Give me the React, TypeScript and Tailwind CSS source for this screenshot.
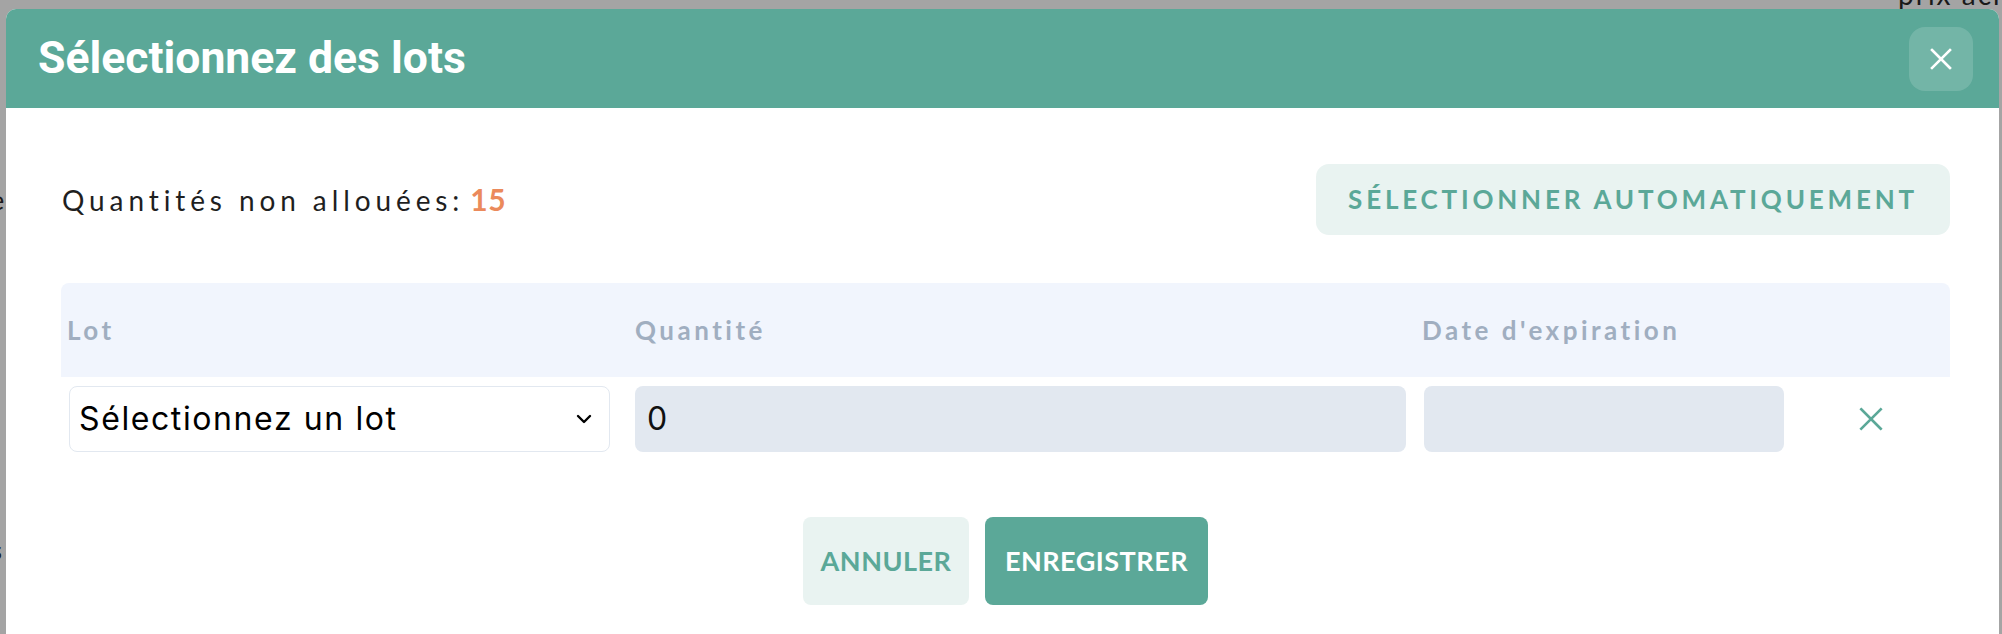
import React from "react";

const body = { fontFamily: "Lato, 'Noto Sans', sans-serif" };
const sys = { fontFamily: "Inter, 'Noto Sans', sans-serif" };
const title = { fontFamily: "Roboto, 'Noto Sans', sans-serif" };

function XIcon({ size, stroke, color }: { size: number; stroke: number; color: string }) {
  return (
    <svg width={size} height={size} viewBox="0 0 24 24" fill="none" stroke={color} strokeWidth={stroke} strokeLinecap="square">
      <path d="M3 3 L21 21 M21 3 L3 21" />
    </svg>
  );
}

export default function App() {
  return (
    <div className="relative h-[634px] w-[2002px] overflow-hidden bg-[#a4a4a4] pl-[6px] pt-[9px]">
      {/* page content behind the overlay */}
      <span className="absolute left-[1898px] top-[-20px] whitespace-nowrap text-[28px] leading-none tracking-[2px] text-[#1a1a1a]" style={body}>
        prix achat
      </span>
      <span className="absolute left-[-10px] top-[186px] whitespace-nowrap text-[27px] leading-none text-[#1a1a1a]" style={body}>
        e
      </span>
      <span className="absolute left-[-10px] top-[536px] whitespace-nowrap text-[27px] font-bold leading-none text-[#1a1a1a]" style={body}>
        s
      </span>

      <div className="relative w-[1993px] overflow-hidden rounded-t-[10px] bg-white">
        {/* header */}
        <div className="flex h-[99px] items-center justify-between bg-[#5ba898] pl-[32px] pr-[26px]">
          <h2 className="text-[44.5px] font-bold leading-none text-white" style={title}>
            Sélectionnez des lots
          </h2>
          <button className="flex h-[64px] w-[64px] items-center justify-center rounded-[16px] bg-white/15">
            <XIcon size={24} stroke={2.6} color="#ffffff" />
          </button>
        </div>

        {/* body */}
        <div className="h-[540px] pl-[55px] pr-[49px] pt-[56px]">
          <div className="flex items-center justify-between">
            <p className="pl-[1px] text-[28px] tracking-[4.9px] text-[#1f1f1f]" style={body}>
              Quantités non allouées:
              <span className="ml-[6px] text-[30px] font-bold tracking-[0.5px] text-[#eb8a5b]">15</span>
            </p>
            <button
              className="h-[71px] w-[634px] rounded-[13px] bg-[#e9f3f1] text-[26px] font-bold uppercase tracking-[3.8px] text-[#5ba898]"
              style={body}
            >
              Sélectionner automatiquement
            </button>
          </div>

          {/* table */}
          <div className="mt-[48px]">
            <div
              className="grid h-[94px] grid-cols-[568px_787px_376px_1fr] items-center rounded-t-[8px] bg-[#f1f5fd] text-[26px] font-bold tracking-[3.5px] text-[#a0aec0]"
              style={body}
            >
              <div className="pl-[6px]">Lot</div>
              <div className="pl-[6px]">Quantité</div>
              <div className="pl-[6px]">Date d'expiration</div>
              <div />
            </div>
            <div className="mt-[9px] grid grid-cols-[568px_787px_376px_1fr] items-center">
              <div className="pl-[8px]">
                <div
                  className="flex h-[66px] w-[541px] items-center justify-between rounded-[8px] border-[1.5px] border-[#e2e8f0] bg-white pl-[9px] pr-[17px] text-[32px] tracking-[1.6px] text-black"
                  style={sys}
                >
                  <span>Sélectionnez un lot</span>
                  <svg width="16" height="10" viewBox="0 0 16 10" fill="none" stroke="#000" strokeWidth="2.4" strokeLinecap="round" strokeLinejoin="round">
                    <path d="M2 2 L8 8 L14 2" />
                  </svg>
                </div>
              </div>
              <div className="pl-[6px]">
                <div className="flex h-[66px] w-[771px] items-center rounded-[8px] bg-[#e2e8f0] pl-[12px] text-[32px] text-[#111]" style={sys}>
                  0
                </div>
              </div>
              <div className="pl-[8px]">
                <div className="h-[66px] w-[360px] rounded-[8px] bg-[#e2e8f0]" />
              </div>
              <div className="flex items-center justify-center">
                <XIcon size={26} stroke={2.4} color="#5ba898" />
              </div>
            </div>
          </div>

          {/* actions */}
          <div className="mt-[65px] flex justify-center gap-[16px]" style={body}>
            <button className="h-[88px] w-[166px] rounded-[8px] bg-[#e9f3f1] text-[27px] font-bold uppercase tracking-[0.5px] text-[#5ba898]">
              Annuler
            </button>
            <button className="h-[88px] w-[223px] rounded-[8px] bg-[#5ba898] text-[27px] font-bold uppercase tracking-[0.5px] text-white">
              Enregistrer
            </button>
          </div>
        </div>
      </div>
    </div>
  );
}
